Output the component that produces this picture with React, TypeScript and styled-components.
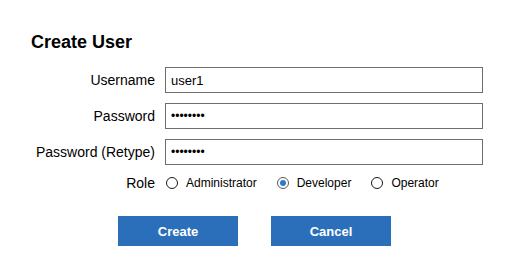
import React from 'react';
import styled, { createGlobalStyle } from 'styled-components';

const GlobalStyle = createGlobalStyle`
  html, body {
    margin: 0;
    padding: 0;
    background: #ffffff;
  }
  body {
    font-family: 'Liberation Sans', Arial, sans-serif;
    color: #000000;
  }
`;

const PageWrapper = styled.div`
  width: 509px;
  height: 275px;
  box-sizing: border-box;
  padding-top: 32px;
`;

const Title = styled.h2`
  margin: 0 0 14px 31px;
  font-size: 18px;
  line-height: 21px;
  font-weight: bold;
`;

const FormGrid = styled.div`
  display: grid;
  grid-template-columns: 155px 318px;
  column-gap: 10px;
  row-gap: 10px;
  align-items: center;
`;

const Label = styled.label`
  text-align: right;
  font-size: 14px;
  line-height: 16px;
  white-space: nowrap;
`;

const TextInput = styled.input`
  box-sizing: border-box;
  width: 318px;
  height: 26px;
  margin: 0;
  padding: 0 5px;
  border: 1px solid #6e6e6e;
  border-radius: 0;
  font-family: 'Liberation Sans', Arial, sans-serif;
  font-size: 13px;
  color: #000000;
  outline: none;
  background: #ffffff;

  &[type='password'] {
    font-size: 12px;
  }
`;

const RoleGroup = styled.div`
  display: flex;
  align-items: center;
  height: 16px;
  padding-left: 1px;
`;

const RadioOption = styled.label`
  display: flex;
  align-items: center;
  gap: 8px;
  margin-right: 20px;
  font-size: 12px;
  line-height: 14px;
`;

const RadioCircle = styled.span<{ $checked?: boolean }>`
  box-sizing: border-box;
  width: 12px;
  height: 12px;
  border-radius: 50%;
  border: 1px solid ${({ $checked }) => ($checked ? '#5a5a5a' : '#1a1a1a')};
  background: #ffffff;
  display: flex;
  align-items: center;
  justify-content: center;

  &::after {
    content: '';
    display: ${({ $checked }) => ($checked ? 'block' : 'none')};
    width: 6px;
    height: 6px;
    border-radius: 50%;
    background: #2f78d0;
  }
`;

const ButtonRow = styled.div`
  display: flex;
  justify-content: center;
  gap: 33px;
  margin-top: 25px;
`;

const Button = styled.button`
  width: 120px;
  height: 30px;
  border: none;
  border-radius: 0;
  background: #2b6fba;
  color: #ffffff;
  font-family: 'Liberation Sans', Arial, sans-serif;
  font-size: 13px;
  font-weight: bold;
  cursor: pointer;
`;

const roles = ['Administrator', 'Developer', 'Operator'];

export default function App() {
  const role = 'Developer';
  return (
    <PageWrapper>
      <GlobalStyle />
      <Title>Create User</Title>
      <FormGrid>
        <Label>Username</Label>
        <TextInput type="text" defaultValue="user1" readOnly />
        <Label>Password</Label>
        <TextInput type="password" defaultValue="password" readOnly />
        <Label>Password (Retype)</Label>
        <TextInput type="password" defaultValue="password" readOnly />
        <Label>Role</Label>
        <RoleGroup>
          {roles.map(item => (
            <RadioOption key={item}>
              <RadioCircle $checked={item === role} />
              {item}
            </RadioOption>
          ))}
        </RoleGroup>
      </FormGrid>
      <ButtonRow>
        <Button>Create</Button>
        <Button>Cancel</Button>
      </ButtonRow>
    </PageWrapper>
  );
}
